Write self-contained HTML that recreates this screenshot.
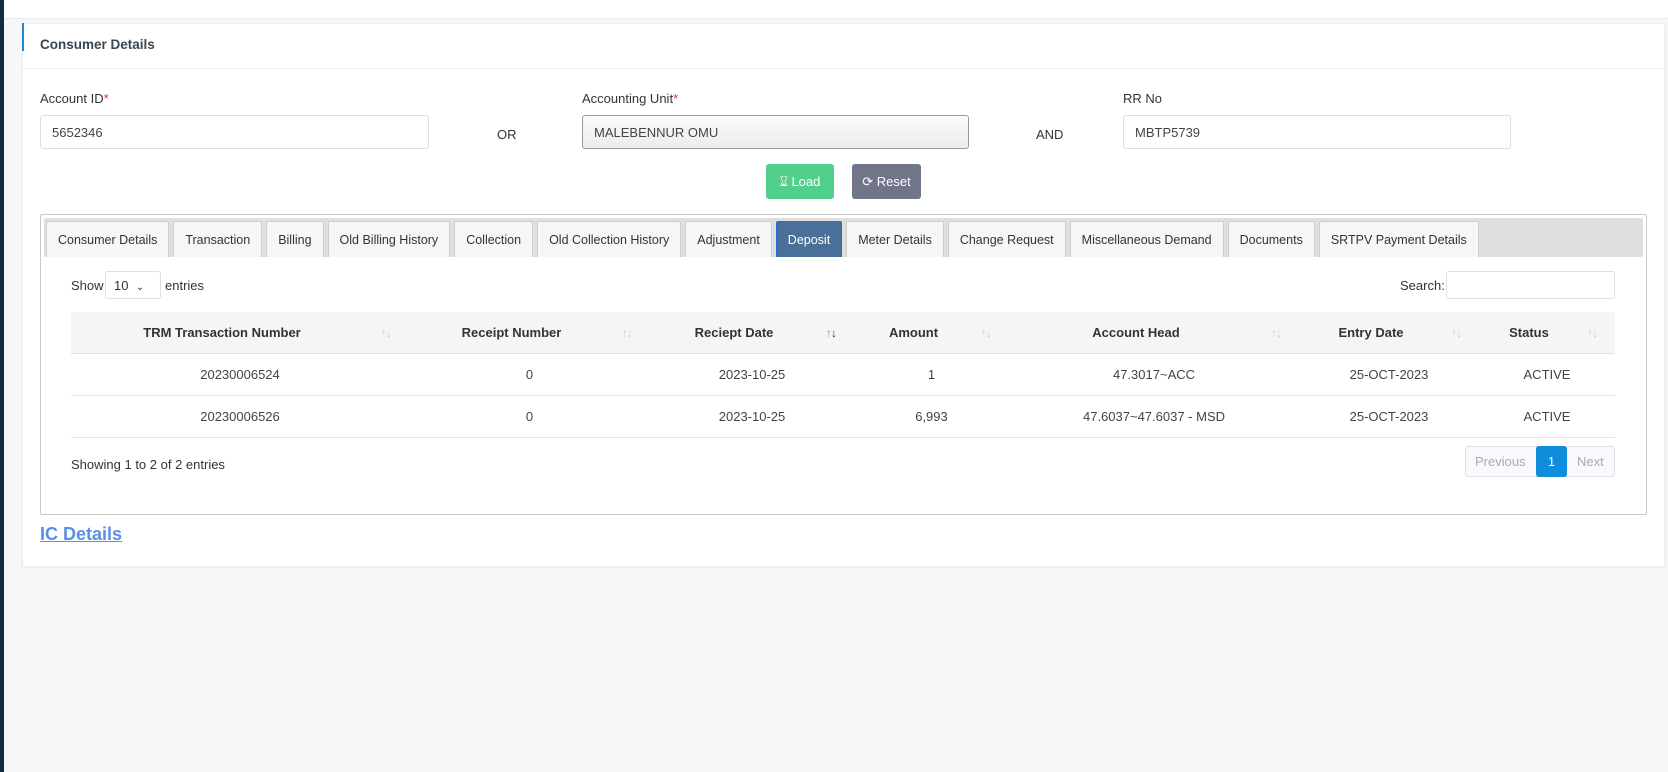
<!DOCTYPE html>
<html><head><meta charset="utf-8"><style>
*{box-sizing:border-box;margin:0;padding:0}
body{width:1668px;height:772px;background:#f5f7f9;font-family:"Liberation Sans",sans-serif;font-size:13px;color:#333;position:relative;overflow:hidden}
.abs{position:absolute}
.side{left:0;top:0;width:4px;height:772px;background:#0f2b47}
.top{left:4px;top:0;width:1664px;height:19px;background:#fff;border-bottom:1px solid #e8eaee}
.card{left:22px;top:23px;width:1643px;height:544px;background:#fff;border:1px solid #eceef2;box-shadow:0 1px 2px rgba(0,0,0,.05)}
.hd{left:22px;top:23px;width:1643px;height:46px;border-bottom:1px solid #eceef0}
.bl{left:22px;top:23px;width:2px;height:28px;background:#1e88d0}
.h1{left:40px;top:37px;font-weight:bold;font-size:13.5px;color:#3a4652}
.lbl{font-size:13px;color:#333}
.req{color:#e33}
.inp{height:34px;border:1px solid #dcdfe3;border-radius:3px;background:#fff;padding:9px 11px;font-size:13px;color:#444}
.btn{height:35px;border-radius:3px;color:#fff;font-size:13px;text-align:center;line-height:35px}
.panel{left:40px;top:214px;width:1607px;height:301px;border:1px solid #c9c9c9;border-radius:2px}
.strip{left:44px;top:218px;width:1599px;height:39px;background:#e1dfde;border-radius:2px}
.tabs{left:46px;top:221px;display:flex;gap:4px}
.tab{height:36px;border:1px solid #cfcfcf;border-bottom:none;background:#f6f6f6;padding:0 11px;line-height:36px;font-size:12.5px;color:#333;border-radius:2px 2px 0 0;white-space:nowrap}
.tab.on{background:#4a7099;color:#fff;border-color:#2a6ad8}
table{border-collapse:collapse;table-layout:fixed}
th{height:41px;background:#f5f5f5;font-weight:bold;font-size:13px;color:#333;text-align:center;position:relative;padding-right:36px;border-bottom:1px solid #e4e4e4}
td{height:42px;text-align:center;font-size:13px;color:#444;border-bottom:1px solid #e4e4e4}
.s{position:absolute;right:18px;top:14px;font-size:12px;color:#c6ccd2;font-weight:normal;letter-spacing:-1px}
</style></head><body>
<div class="abs side"></div>
<div class="abs top"></div>
<div class="abs card"></div>
<div class="abs hd"></div>
<div class="abs bl"></div>
<div class="abs h1">Consumer Details</div>

<div class="abs lbl" style="left:40px;top:91px">Account ID<span class="req">*</span></div>
<div class="abs inp" style="left:40px;top:115px;width:389px">5652346</div>
<div class="abs lbl" style="left:497px;top:127px">OR</div>
<div class="abs lbl" style="left:582px;top:91px">Accounting Unit<span class="req">*</span></div>
<div class="abs inp" style="left:582px;top:115px;width:387px;border-color:#9a9a9a;background:linear-gradient(#fafafa,#ececec)">MALEBENNUR OMU</div>
<div class="abs lbl" style="left:1036px;top:127px">AND</div>
<div class="abs lbl" style="left:1123px;top:91px">RR No</div>
<div class="abs inp" style="left:1123px;top:115px;width:388px">MBTP5739</div>

<div class="abs btn" style="left:766px;top:164px;width:68px;background:#50d08c">&#8987;&#xFE0E; Load</div>
<div class="abs btn" style="left:852px;top:164px;width:69px;background:#707589">&#10227; Reset</div>

<div class="abs panel"></div>
<div class="abs strip"></div>
<div class="abs tabs">
<div class="tab">Consumer Details</div><div class="tab">Transaction</div><div class="tab">Billing</div><div class="tab">Old Billing History</div><div class="tab">Collection</div><div class="tab">Old Collection History</div><div class="tab">Adjustment</div><div class="tab on">Deposit</div><div class="tab">Meter Details</div><div class="tab">Change Request</div><div class="tab">Miscellaneous Demand</div><div class="tab">Documents</div><div class="tab">SRTPV Payment Details</div>
</div>

<div class="abs lbl" style="left:71px;top:278px">Show</div>
<div class="abs" style="left:105px;top:271px;width:56px;height:28px;border:1px solid #dcdfe3;border-radius:3px;padding:6px 8px;font-size:13px">10 &nbsp;<span style="font-size:10px">&#8964;</span></div>
<div class="abs lbl" style="left:165px;top:278px">entries</div>
<div class="abs lbl" style="left:1400px;top:278px">Search:</div>
<div class="abs" style="left:1446px;top:271px;width:169px;height:28px;border:1px solid #dcdfe3;border-radius:3px"></div>

<table class="abs" style="left:71px;top:312px;width:1544px">
<colgroup><col style="width:338px"><col style="width:241px"><col style="width:204px"><col style="width:155px"><col style="width:290px"><col style="width:180px"><col style="width:136px"></colgroup>
<tr><th>TRM Transaction Number<span class="s">↑↓</span></th><th>Receipt Number<span class="s">↑↓</span></th><th>Reciept Date<span class="s" style="color:#99a">↑<b style="color:#333">↓</b></span></th><th>Amount<span class="s">↑↓</span></th><th>Account Head<span class="s">↑↓</span></th><th>Entry Date<span class="s">↑↓</span></th><th>Status<span class="s">↑↓</span></th></tr>
<tr><td>20230006524</td><td>0</td><td>2023-10-25</td><td>1</td><td>47.3017~ACC</td><td>25-OCT-2023</td><td>ACTIVE</td></tr>
<tr><td>20230006526</td><td>0</td><td>2023-10-25</td><td>6,993</td><td>47.6037~47.6037 - MSD</td><td>25-OCT-2023</td><td>ACTIVE</td></tr>
</table>

<div class="abs lbl" style="left:71px;top:457px">Showing 1 to 2 of 2 entries</div>
<div class="abs" style="left:1465px;top:446px;width:150px;height:31px;border:1px solid #dee2e6;border-radius:3px;background:#f8f9fa"></div>
<div class="abs" style="left:1475px;top:454px;color:#aab;font-size:13px">Previous</div>
<div class="abs" style="left:1536px;top:446px;width:31px;height:31px;background:#0d8ddb;color:#fff;border-radius:3px;text-align:center;line-height:31px">1</div>
<div class="abs" style="left:1577px;top:454px;color:#aab;font-size:13px">Next</div>

<div class="abs" style="left:40px;top:524px;font-size:18px;font-weight:bold;color:#5b8fe6;text-decoration:underline">IC Details</div>
</body></html>
